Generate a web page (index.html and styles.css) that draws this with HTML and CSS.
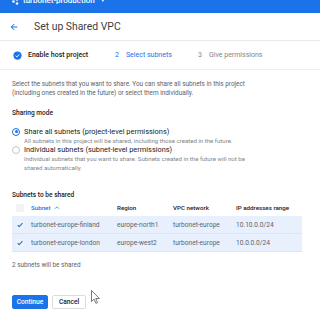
FILE: index.html
```html
<!DOCTYPE html>
<html>
<head>
<meta charset="utf-8">
<link rel="stylesheet" href="styles.css">
</head>
<body>
<div class="topbar">
  <svg class="proj-icon" width="7" height="7" viewBox="0 0 7 7"><circle cx="1.5" cy="3.5" r="1.3" fill="#fff"/><circle cx="5" cy="1.5" r="1.3" fill="#fff"/><circle cx="5" cy="5.5" r="1.3" fill="#fff"/></svg>
  <span class="proj-name">turbonet-production</span>
  <span class="caret">▾</span>
</div>
<div class="header">
  <svg class="back" width="10" height="10" viewBox="0 0 24 24"><path d="M20 11H7.83l5.59-5.59L12 4l-8 8 8 8 1.41-1.41L7.830 13H20v-2z" fill="#1a73e8"/></svg>
  <h1 class="title">Set up Shared VPC</h1>
</div>
<div class="stepper">
  <div class="step done">
    <svg width="9" height="9" viewBox="0 0 24 24"><circle cx="12" cy="12" r="11" fill="#1a73e8"/><path d="M7 12.5l3.2 3.2L17 9" stroke="#fff" stroke-width="2.6" fill="none"/></svg>
    <span>Enable host project</span>
  </div>
  <div class="step active"><span class="num">2</span><span>Select subnets</span></div>
  <div class="step todo"><span class="num">3</span><span>Give permissions</span></div>
</div>
<div class="content">
  <p class="desc">Select the subnets that you want to share. You can share all subnets in this project<br>(including ones created in the future) or select them individually.</p>
  <h2 class="section">Sharing mode</h2>
  <div class="radio-group">
    <div class="radio">
      <span class="dot on"></span>
      <div>
        <div class="rlabel">Share all subnets (project-level permissions)</div>
        <div class="rhint">All subnets in this project will be shared, including those created in the future.</div>
      </div>
    </div>
    <div class="radio">
      <span class="dot"></span>
      <div>
        <div class="rlabel">Individual subnets (subnet-level permissions)</div>
        <div class="rhint">Individual subnets that you want to share. Subnets created in the future will not be<br>shared automatically.</div>
      </div>
    </div>
  </div>
  <h2 class="section tbl-title">Subnets to be shared</h2>
  <table class="tbl">
    <thead>
      <tr>
        <th class="c-chk"><span class="cb empty"></span></th>
        <th class="c-subnet sort">Subnet <svg width="6" height="6" viewBox="0 0 24 24"><path d="M4 15l8-8 8 8" stroke="#1a73e8" stroke-width="3" fill="none"/></svg></th>
        <th class="c-region">Region</th>
        <th class="c-vpc">VPC network</th>
        <th>IP addresses range</th>
      </tr>
    </thead>
    <tbody>
      <tr>
        <td class="c-chk"><svg class="cb" width="8" height="8" viewBox="0 0 24 24"><rect x="1" y="1" width="22" height="22" rx="2" fill="#f1f3f4"/><path d="M5 12.5l4.5 4.5L19.5 6.5" stroke="#1a73e8" stroke-width="3.2" fill="none"/></svg></td>
        <td>turbonet-europe-finland</td>
        <td>europe-north1</td>
        <td>turbonet-europe</td>
        <td>10.10.0.0/24</td>
      </tr>
      <tr>
        <td class="c-chk"><svg class="cb" width="8" height="8" viewBox="0 0 24 24"><rect x="1" y="1" width="22" height="22" rx="2" fill="#f1f3f4"/><path d="M5 12.5l4.5 4.5L19.5 6.5" stroke="#1a73e8" stroke-width="3.2" fill="none"/></svg></td>
        <td>turbonet-europe-london</td>
        <td>europe-west2</td>
        <td>turbonet-europe</td>
        <td>10.0.0.0/24</td>
      </tr>
    </tbody>
  </table>
  <p class="count">2 subnets will be shared</p>
  <div class="actions">
    <button class="btn primary">Continue</button>
    <button class="btn">Cancel</button>
    <svg class="cursor" width="10" height="14" viewBox="0 0 10 14"><path d="M0.5 0.5v11l2.6-2.4 1.8 4.2 1.7-0.7-1.8-4.1h3.6z" fill="#fff" stroke="#555" stroke-width="0.8"/></svg>
  </div>
</div>
</body>
</html>
```
FILE: styles.css
```css
html, body { margin: 0; padding: 0; background: #fff; }
body {
  font-family: Roboto, "Liberation Sans", sans-serif;
  color: #202124;
  width: 320px;
  height: 320px;
  overflow: hidden;
  position: relative;
}
.topbar {
  height: 26px;
  margin-top: -13px;
  background: #1a73e8;
  display: flex;
  align-items: center;
  padding-left: 12px;
  color: #fff;
  font-size: 8px;
}
.proj-icon { margin-right: 4px; margin-top: 2px; }
.proj-name { font-weight: 500; }
.caret { margin-left: 6px; font-size: 7px; }
.header {
  height: 27px;
  display: flex;
  align-items: center;
  border-bottom: 1px solid #e8eaed;
  padding-left: 9px;
}
.back { margin-right: 15px; }
.title {
  margin: 0;
  font-size: 10.4px;
  font-weight: 400;
  color: #3c4043;
}
.stepper {
  height: 28px;
  display: flex;
  align-items: center;
  border-bottom: 1px solid #eceef1;
  padding-left: 13px;
  font-size: 7px;
}
.step { display: flex; align-items: center; }
.step svg { margin-right: 6px; }
.step.done { font-weight: 500; color: #202124; width: 102px; }
.step .num { margin-right: 7px; }
.step.active { color: #1a73e8; width: 83px; }
.step.todo { color: #80868b; }
.content { padding: 0 12px; }
.desc {
  margin: 10px 0 0;
  font-size: 6.4px;
  line-height: 9px;
  color: #5f6368;
}
.section {
  margin: 11px 0 0;
  font-size: 6.6px;
  font-weight: 500;
  color: #202124;
  line-height: 9px;
}
.radio-group { margin-top: 9px; }
.radio { display: flex; align-items: flex-start; }
.dot {
  width: 6px; height: 6px;
  border: 1px solid #c4c7cc;
  border-radius: 50%;
  margin: 0.5px 4px 0 0;
  flex: none;
  position: relative;
}
.dot.on { border-color: #1a73e8; }
.dot.on::after {
  content: "";
  position: absolute;
  left: 1.5px; top: 1.5px;
  width: 3px; height: 3px;
  border-radius: 50%;
  background: #1a73e8;
}
.rlabel { font-size: 7.4px; line-height: 9px; color: #202124; }
.rhint { font-size: 6.1px; line-height: 9px; color: #80868b; }
.tbl-title { margin-top: 19px; }
.tbl {
  margin-top: 0;
  width: 290px;
  border-collapse: collapse;
  font-size: 6.6px;
}
.tbl th {
  text-align: left;
  font-weight: 500;
  color: #202124;
  height: 15px;
  padding: 0;
  font-size: 6.2px;
}
.tbl th.sort { color: #1a73e8; }
.tbl th svg { vertical-align: middle; margin-left: 2px; }
.tbl td {
  height: 17px;
  padding: 0;
  color: #5f6368;
  border-top: 1px solid #fff;
}
.tbl tbody tr { background: #e8f0fe; }
.tbl tbody tr + tr td { border-top: 1px solid #dfe5ef; }
.tbl tbody tr:last-child td { border-bottom: 1px solid #dfe5ef; }
.c-chk { width: 15px; padding-left: 4px !important; }
.c-chk svg, .cb { display: block; }
.cb.empty {
  width: 8px; height: 8px;
  background: #f1f3f4;
  border-radius: 1px;
}
.c-subnet { width: 86px; }
.c-region { width: 56px; }
.c-vpc { width: 63px; }
.count {
  margin: 9px 0 0;
  font-size: 6.4px;
  color: #5f6368;
}
.actions {
  margin-top: 26px;
  display: flex;
  align-items: center;
  gap: 4px;
  position: relative;
}
.btn {
  font-family: inherit;
  font-size: 6.6px;
  height: 14px;
  padding: 0 6px;
  border: 1px solid #dadce0;
  background: #fff;
  color: #202124;
  border-radius: 2px;
  font-weight: 500;
}
.btn.primary {
  background: #1a73e8;
  border-color: #1a73e8;
  color: #fff;
  width: 36px;
  padding: 0;
}
.cursor { position: absolute; left: 79px; top: -5px; }
```
